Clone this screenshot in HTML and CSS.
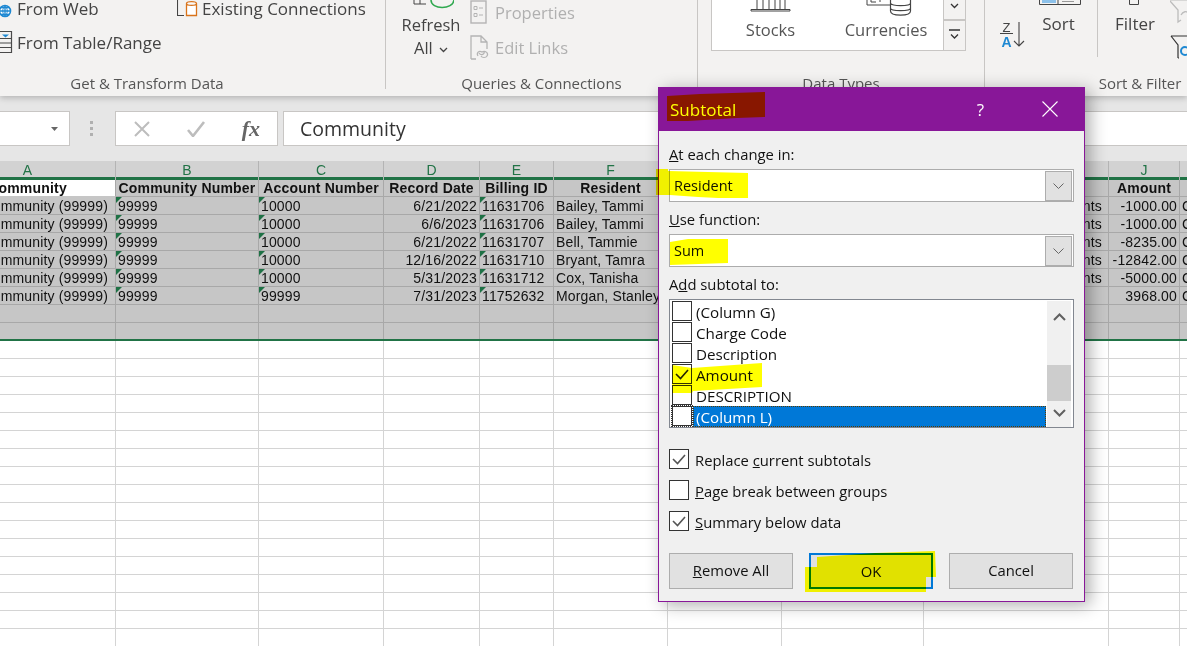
FILE: index.html
```html
<!DOCTYPE html>
<html lang="en">
<head>
<meta charset="utf-8">
<title>Subtotal</title>
<link rel="stylesheet" href="styles.css">
</head>
<body>
<div class="stage">
  <header class="ribbon">
    <section class="group group-get">
      <div class="group-body">
        <div class="col col-sources">
          <div class="cmd cmd-first">
            <svg class="ico" width="14" height="20" viewBox="0 0 14 20"><path d="M1 0h3" stroke="#555" fill="none"/><circle cx="5" cy="13" r="5.500" fill="#fff" stroke="#1e88d2" stroke-width="1.600"/><path d="M-1 13h12M5 7v12M1 9.500h8M1 16.500h8" stroke="#1e88d2" stroke-width="1.300" fill="none"/><path d="M5 7.500c-3 3-3 8 0 11M5 7.500c3 3 3 8 0 11" stroke="#1e88d2" fill="none"/></svg>
            <span>From Web</span>
          </div>
          <div class="cmd cmd-table">
            <svg class="ico" width="14" height="22" viewBox="0 0 14 22"><path d="M0 .5h11.500v21H0M0 7.500h11.500M0 12h11.500M0 16.500h11.500" stroke="#4a4a4a" stroke-width="1.200" fill="none"/><path d="M2 3.500h7l-3.500 3z" fill="#1e88d2"/></svg>
            <span>From Table/Range</span>
          </div>
        </div>
        <div class="col">
          <div class="cmd cmd-first">
            <svg class="ico" width="22" height="20" viewBox="0 0 22 20"><path d="M0.500 0v17.500H7M0 .5h3" stroke="#444" stroke-width="1.100" fill="none"/><path d="M9.500 5.500c0-2.500 10-2.500 10 0v12h-10zM9.500 5.500c0 2.500 10 2.500 10 0" stroke="#d9731a" stroke-width="1.300" fill="#fff"/></svg>
            <span>Existing Connections</span>
          </div>
        </div>
      </div>
      <div class="group-label">Get &amp; Transform Data</div>
    </section>

    <section class="group group-queries">
      <div class="group-body">
        <div class="refresh">
          <svg class="refresh-ico" width="46" height="13" viewBox="0 0 46 13"><path d="M6 0v4h12M12 0v4" stroke="#444" fill="none"/><path d="M23 0c0 10 22 10 23 0" stroke="#2fa84f" stroke-width="1.500" fill="none"/></svg>
          <div class="refresh-line">Refresh</div>
          <div class="refresh-line">All <svg width="9" height="6" viewBox="0 0 9 6"><path d="M1 1l3.500 3.500L8 1" stroke="#444" stroke-width="1.300" fill="none"/></svg></div>
        </div>
        <div class="col col-links">
          <div class="cmd cmd-muted cmd-props">
            <svg class="ico" width="22" height="24" viewBox="0 0 22 24"><rect x="1" y="1" width="15" height="22" fill="none" stroke="#b4b4b4" stroke-width="1.400"/><path d="M4 6.500h3v3H4zM4 13.500h3v3H4zM9 8h4M9 15h4" fill="none" stroke="#b4b4b4"/></svg>
            <span>Properties</span>
          </div>
          <div class="cmd cmd-muted cmd-links">
            <svg class="ico" width="22" height="25" viewBox="0 0 22 25"><path d="M1 24V1h10l6 6v7M11 1v6h6M1 24h5" fill="none" stroke="#b4b4b4" stroke-width="1.300"/><path d="M8 21c-2-3 1-6 4-4 3-2 7 1 5 4-1 2-5 2-6 0M9 18c2 3 6 1 5-1" fill="none" stroke="#b4b4b4" stroke-width="1.200"/></svg>
            <span>Edit Links</span>
          </div>
        </div>
      </div>
      <div class="group-label">Queries &amp; Connections</div>
    </section>

    <section class="group group-types">
      <div class="group-body">
        <div class="gallery">
          <div class="gallery-item gallery-stocks">
            <svg width="42" height="19" viewBox="0 0 42 19"><path d="M7 0v9M13 0v9M19 0v9M25 0v9M30 0v9M35 0v9" stroke="#444" fill="none"/><path d="M1 9.500h39v1.500H1z" stroke="#444" fill="none"/></svg>
            <span>Stocks</span>
          </div>
          <div class="gallery-item gallery-currencies">
            <svg class="currency-ico" width="46" height="19" viewBox="0 0 46 19"><path d="M1 0v5h23M5 0v2h5M14 0v2" stroke="#444" fill="none"/><path d="M24.500 0v11c0 5.500 20 5.500 20 0V0M24.500 3c0 3.500 20 3.500 20 0M24.500 8c0 3.500 20 3.500 20 0" stroke="#444" fill="#fff" stroke-width="1.200"/></svg>
            <span>Currencies</span>
          </div>
          <div class="gallery-scroll">
            <div class="scroll-btn scroll-btn-up"><svg width="9" height="6" viewBox="0 0 9 6"><path d="M1 1l3.500 3.500L8 1" stroke="#333" stroke-width="1.300" fill="none"/></svg></div>
            <div class="scroll-btn scroll-btn-more"><svg width="11" height="11" viewBox="0 0 11 11"><path d="M0 1h11" stroke="#333" stroke-width="1.500"/><path d="M2 5.500l3.500 3.500L9 5.500" stroke="#333" stroke-width="1.300" fill="none"/></svg></div>
          </div>
        </div>
      </div>
      <div class="group-label">Data Types</div>
    </section>

    <section class="group group-sort">
      <div class="group-body">
        <div class="sort-za">
          <span class="za-letters"><span class="za-z">Z</span><span class="za-a">A</span></span>
          <svg width="12" height="25" viewBox="0 0 12 25"><path d="M6 0v24M1 19l5 5 5-5" stroke="#444" stroke-width="1.100" fill="none"/></svg>
        </div>
        <div class="sort-big">
          <svg width="42" height="14" viewBox="0 0 42 14"><path d="M.5 0v4.500h41V0M19 0v4.500" stroke="#444" fill="none"/><path d="M3 0h14v3H3z" fill="#8cc1ea"/><path d="M23 1.500h12" stroke="#999"/></svg>
          <span>Sort</span>
        </div>
        <div class="sort-sep"></div>
        <div class="sort-big sort-filter">
          <svg width="38" height="14" viewBox="0 0 38 14"><path d="M13.500 0v4.500h9V0" stroke="#444" fill="none"/></svg>
          <span>Filter</span>
        </div>
        <div class="funnels">
          <svg width="18" height="24" viewBox="0 0 18 24"><path d="M0 1l8 9v12l3-2" stroke="#bcbcbc" stroke-width="1.300" fill="none"/><path d="M11 15c2-4 6-4 7-2" stroke="#bcbcbc" stroke-width="1.300" fill="none"/><path d="M0 0h18" stroke="#bcbcbc"/></svg>
          <svg width="18" height="24" viewBox="0 0 18 24"><path d="M1 1h16M1 1l7 9v13M8 23h1" stroke="#333" stroke-width="1.200" fill="none"/><circle cx="15" cy="16" r="4" fill="none" stroke="#1e88d2" stroke-width="2"/></svg>
        </div>
      </div>
      <div class="group-label">Sort &amp; Filter</div>
    </section>
  </header>

  <div class="formula-band">
    <div class="name-box"><svg width="7" height="4" viewBox="0 0 7 4"><path d="M0 0h7L3.500 4z" fill="#666"/></svg></div>
    <div class="grip"><i></i><i></i><i></i></div>
    <div class="fx-box">
      <svg width="18" height="16" viewBox="0 0 18 16"><path d="M2 1l14 14M16 1L2 15" stroke="#bdbdbd" stroke-width="2" fill="none"/></svg>
      <svg width="20" height="16" viewBox="0 0 20 16"><path d="M2 9l5 6L18 1" stroke="#bdbdbd" stroke-width="2.600" fill="none"/></svg>
      <span class="fx">fx</span>
    </div>
    <div class="formula-input">Community</div>
  </div>

  <main class="sheet">
    <div class="columns">
      <div class="col-head">A</div><div class="col-head">B</div><div class="col-head">C</div><div class="col-head">D</div><div class="col-head">E</div><div class="col-head">F</div><div class="col-head">G</div><div class="col-head">H</div><div class="col-head">I</div><div class="col-head">J</div><div class="col-head">K</div>
    </div>
    <div class="selection">
      <div class="row row-head">
        <div class="cell head active">Community</div><div class="cell head">Community Number</div><div class="cell head">Account Number</div><div class="cell head">Record Date</div><div class="cell head">Billing ID</div><div class="cell head">Resident</div><div class="cell head"></div><div class="cell head"></div><div class="cell head"></div><div class="cell head">Amount</div><div class="cell head"></div>
      </div>
      <div class="row">
        <div class="cell num">Community (99999)</div><div class="cell flag">99999</div><div class="cell flag">10000</div><div class="cell num">6/21/2022</div><div class="cell flag">11631706</div><div class="cell">Bailey, Tammi</div><div class="cell"></div><div class="cell"></div><div class="cell tail">Adjustments</div><div class="cell num">-1000.00</div><div class="cell">Credit</div>
      </div>
      <div class="row">
        <div class="cell num">Community (99999)</div><div class="cell flag">99999</div><div class="cell flag">10000</div><div class="cell num">6/6/2023</div><div class="cell flag">11631706</div><div class="cell">Bailey, Tammi</div><div class="cell"></div><div class="cell"></div><div class="cell tail">Adjustments</div><div class="cell num">-1000.00</div><div class="cell">Credit</div>
      </div>
      <div class="row">
        <div class="cell num">Community (99999)</div><div class="cell flag">99999</div><div class="cell flag">10000</div><div class="cell num">6/21/2022</div><div class="cell flag">11631707</div><div class="cell">Bell, Tammie</div><div class="cell"></div><div class="cell"></div><div class="cell tail">Adjustments</div><div class="cell num">-8235.00</div><div class="cell">Credit</div>
      </div>
      <div class="row">
        <div class="cell num">Community (99999)</div><div class="cell flag">99999</div><div class="cell flag">10000</div><div class="cell num">12/16/2022</div><div class="cell flag">11631710</div><div class="cell">Bryant, Tamra</div><div class="cell"></div><div class="cell"></div><div class="cell tail">Adjustments</div><div class="cell num">-12842.00</div><div class="cell">Credit</div>
      </div>
      <div class="row">
        <div class="cell num">Community (99999)</div><div class="cell flag">99999</div><div class="cell flag">10000</div><div class="cell num">5/31/2023</div><div class="cell flag">11631712</div><div class="cell">Cox, Tanisha</div><div class="cell"></div><div class="cell"></div><div class="cell tail">Adjustments</div><div class="cell num">-5000.00</div><div class="cell">Credit</div>
      </div>
      <div class="row">
        <div class="cell num">Community (99999)</div><div class="cell flag">99999</div><div class="cell flag">99999</div><div class="cell num">7/31/2023</div><div class="cell flag">11752632</div><div class="cell">Morgan, Stanley</div><div class="cell"></div><div class="cell"></div><div class="cell"></div><div class="cell num">3968.00</div><div class="cell">Credit</div>
      </div>
      <div class="row">
        <div class="cell"></div><div class="cell"></div><div class="cell"></div><div class="cell"></div><div class="cell"></div><div class="cell"></div><div class="cell"></div><div class="cell"></div><div class="cell"></div><div class="cell"></div><div class="cell"></div>
      </div>
      <div class="row row-last">
        <div class="cell"></div><div class="cell"></div><div class="cell"></div><div class="cell"></div><div class="cell"></div><div class="cell"></div><div class="cell"></div><div class="cell"></div><div class="cell"></div><div class="cell"></div><div class="cell"></div>
      </div>
    </div>
    <div class="empty-grid">
      <div></div><div></div><div></div><div></div><div></div><div></div><div></div><div></div><div></div><div></div><div></div>
    </div>
  </main>

  <div class="dialog" role="dialog" aria-label="Subtotal">
    <div class="title-bar">
      <span class="title-text">Subtotal</span>
      <span class="title-help">?</span>
      <svg class="title-close" width="16" height="16" viewBox="0 0 16 16"><path d="M.5.500l15 15M15.500.500l-15 15" stroke="#fff" stroke-width="1.100" fill="none"/></svg>
    </div>
    <div class="dialog-body">
      <div class="field-label"><u>A</u>t each change in:</div>
      <div class="select">
        <span class="select-value">Resident</span>
        <span class="select-btn"><svg width="11" height="6" viewBox="0 0 11 6"><path d="M.5.500l5 5 5-5" stroke="#666" fill="none"/></svg></span>
      </div>
      <div class="field-label field-next"><u>U</u>se function:</div>
      <div class="select">
        <span class="select-value">Sum</span>
        <span class="select-btn"><svg width="11" height="6" viewBox="0 0 11 6"><path d="M.5.500l5 5 5-5" stroke="#666" fill="none"/></svg></span>
      </div>
      <div class="field-label field-next">A<u>d</u>d subtotal to:</div>
      <div class="list">
        <div class="list-rows">
          <div class="list-row"><span class="box"></span><span class="list-text">(Column G)</span></div>
          <div class="list-row"><span class="box"></span><span class="list-text">Charge Code</span></div>
          <div class="list-row"><span class="box"></span><span class="list-text">Description</span></div>
          <div class="list-row"><span class="box"><svg width="18" height="18" viewBox="0 0 18 18"><path d="M3 9l4.500 4.500L15 5" stroke="#222" stroke-width="1.600" fill="none"/></svg></span><span class="list-text">Amount</span></div>
          <div class="list-row"><span class="box"></span><span class="list-text">DESCRIPTION</span></div>
          <div class="list-row list-row-on"><span class="box box-focus"></span><span class="list-text">(Column L)</span></div>
        </div>
        <div class="scrollbar">
          <div class="sb-arrow sb-up"><svg width="13" height="8" viewBox="0 0 13 8"><path d="M1 7l5.500-5.500L12 7" stroke="#606060" stroke-width="2" fill="none"/></svg></div>
          <div class="sb-thumb"></div>
          <div class="sb-arrow sb-down"><svg width="13" height="8" viewBox="0 0 13 8"><path d="M1 1l5.500 5.500L12 1" stroke="#606060" stroke-width="2" fill="none"/></svg></div>
        </div>
      </div>
      <div class="checks">
        <div class="check"><span class="box"><svg width="18" height="18" viewBox="0 0 18 18"><path d="M3 9l4.500 4.500L15 5" stroke="#555" stroke-width="1.600" fill="none"/></svg></span><span class="check-text">Replace <u>c</u>urrent subtotals</span></div>
        <div class="check"><span class="box"></span><span class="check-text"><u>P</u>age break between groups</span></div>
        <div class="check"><span class="box"><svg width="18" height="18" viewBox="0 0 18 18"><path d="M3 9l4.500 4.500L15 5" stroke="#555" stroke-width="1.600" fill="none"/></svg></span><span class="check-text"><u>S</u>ummary below data</span></div>
      </div>
      <div class="actions">
        <div class="btn"><u>R</u>emove All</div>
        <div class="btn btn-default">OK</div>
        <div class="btn">Cancel</div>
      </div>
    </div>
  </div>

  <svg class="marker" width="1187" height="646" viewBox="0 0 1187 646" aria-hidden="true">
    <path d="M667 96L700 94L765 92V117L737 118L688 121H667Z"/>
    <path d="M656 169H668V171L748 173V198H718L698 197L670 195H656Z"/>
    <path d="M670 242L688 239H728V263L670 265Z"/>
    <path d="M672 365L692 368L762 363V387L693 391L692 393H672Z"/>
    <path d="M817 557L875 553L935 551L936 577H926V592H805V567H817Z"/>
  </svg>
</div>
</body>
</html>
```
FILE: styles.css
```css
* { box-sizing: border-box; }
html, body { margin: 0; padding: 0; }
.stage {
  position: relative;
  width: 1187px;
  height: 646px;
  overflow: hidden;
  background: #fff;
  font-family: "Open Sans", "Noto Sans", sans-serif;
  font-size: 14px;
  color: #1a1a1a;
}

/* Ribbon */
.ribbon {
  position: relative;
  z-index: 2;
  display: flex;
  height: 96px;
  background: #f3f2f1;
  box-shadow: 0 2px 6px rgba(0,0,0,.22);
  color: #444;
  font-size: 17px;
}
.group {
  position: relative;
  flex: none;
  height: 89px;
  border-right: 1px solid #c8c6c4;
}
.group-body { display: flex; height: 74px; overflow: hidden; }
.group-label { height: 20px; line-height: 18px; font-size: 15px; text-align: center; color: #555; white-space: nowrap; }
.group-get { width: 477px; margin-left: -91px; }
.group-queries { width: 312px; }
.group-types { width: 287px; }
.group-sort { width: 310px; border-right: 0; }
.col { display: flex; flex-direction: column; }
.col-sources { width: 268px; padding-left: 91px; }
.cmd { display: flex; align-items: center; height: 20px; white-space: nowrap; }
.cmd-first { margin-top: -2px; }
.cmd-table { margin-top: 14px; }
.ico { flex: none; }
.cmd .ico + span { margin-left: 3px; }
.cmd-muted { color: #b0b0b0; }

.refresh { width: 84px; padding-left: 10px; padding-right: 4px; text-align: center; font-size: 16.5px; }
.refresh-ico { display: block; margin: 0 auto; }
.refresh-line { height: 23px; line-height: 23px; white-space: nowrap; }
.refresh-line svg { vertical-align: middle; margin-left: 2px; }
.col-links { padding-top: 2px; font-size: 16.5px; }
.cmd-links { margin-top: 15px; }

.gallery {
  display: flex;
  width: 255px;
  height: 51px;
  margin-left: 13px;
  background: #fff;
  border: 1px solid #c8c6c4;
  border-top: 0;
}
.gallery-item { display: flex; flex-direction: column; align-items: center; flex: none; white-space: nowrap; }
.gallery-item svg { display: block; }
.gallery-item span { line-height: 22px; color: #555; font-size: 16.5px; }
.gallery-stocks { width: 117px; }
.gallery-currencies { width: 114px; }
.gallery-item .currency-ico { margin-left: 6px; }
.gallery-scroll { margin-left: auto; width: 22px; border-left: 1px solid #c8c6c4; background: #f3f2f1; }
.scroll-btn { display: flex; justify-content: center; }
.scroll-btn-up { height: 21px; padding-top: 3px; border-bottom: 2px solid #c8c6c4; }
.scroll-btn-more { padding-top: 8px; }

.sort-za { display: flex; width: 54px; padding: 22px 0 0 15px; }
.za-letters { display: flex; flex-direction: column; width: 13px; font-family: "Liberation Sans", sans-serif; }
.za-z { color: #444; border-bottom: 1px solid #444; height: 12px; font-size: 13px; line-height: 11px; text-align: center; }
.za-a { color: #1e88d2; font-weight: bold; font-size: 14px; line-height: 12px; text-align: center; margin-top: 2px; }
.sort-big { display: flex; flex-direction: column; align-items: center; width: 42px; flex: none; white-space: nowrap; }
.sort-big svg { display: block; }
.sort-big span { line-height: 20px; margin-right: 3px; }
.sort-sep { width: 1px; height: 57px; margin-left: 16px; background: #c8c6c4; }
.sort-filter { margin-left: 18px; width: 38px; }
.sort-filter span { margin-right: 0; }
.funnels { display: flex; flex-direction: column; gap: 11px; margin-left: 16px; }
.funnels svg { display: block; }

/* Formula bar */
.formula-band {
  display: flex;
  height: 65px;
  padding-top: 15px;
  background: #e6e6e6;
}
.name-box {
  display: flex;
  align-items: center;
  justify-content: flex-end;
  width: 70px;
  height: 35px;
  padding-right: 11px;
  background: #fff;
  border: 1px solid #c8c6c4;
  border-left: 0;
}
.grip { display: flex; flex-direction: column; align-items: center; justify-content: center; gap: 3px; width: 45px; height: 35px; padding-right: 2px; }
.grip i { width: 3px; height: 3px; background: #b0b0b0; }
.fx-box {
  display: flex;
  align-items: center;
  width: 163px;
  height: 35px;
  padding: 0 17px;
  justify-content: space-between;
  background: #fff;
  border: 1px solid #c8c6c4;
}
.fx { font-family: "Liberation Serif", serif; font-style: italic; font-weight: bold; font-size: 22px; color: #666; }
.formula-input {
  flex: 1;
  height: 35px;
  margin-left: 5px;
  padding-left: 16px;
  line-height: 33px;
  font-size: 19.500px;
  color: #333;
  background: #fff;
  border: 1px solid #c8c6c4;
  border-right: 0;
}

/* Sheet */
.sheet { margin-left: -60px; width: 1340px; }
.columns, .row, .empty-grid {
  display: grid;
  grid-template-columns: 176px 143px 125px 96px 74px 114px 114px 142px 185px 71px 100px;
}
.columns { height: 16px; background: #d2d2d2; }
.col-head {
  line-height: 19px;
  text-align: center;
  color: #217346;
  font-family: "Liberation Sans", sans-serif;
  font-size: 14px;
  border-right: 1px solid #b4b4b4;
}
.selection {
  border-top: 3px solid #217346;
  border-bottom: 2px solid #217346;
  background: #c6c6c6;
  font-family: "Liberation Sans", sans-serif;
  letter-spacing: .15px;
  color: #111;
}
.row { height: 18px; }
.row-head { height: 17px; }
.row-last { height: 16px; }
.cell {
  position: relative;
  height: 100%;
  padding: 0 2px;
  line-height: 18px;
  white-space: nowrap;
  overflow: hidden;
  border-right: 1px solid #a8a8a8;
  border-bottom: 1px solid #a8a8a8;
}
.row-last .cell { border-bottom: 0; }
.head { font-weight: bold; text-align: center; line-height: 17px; letter-spacing: .2px; }
.active { background: #fff; border-bottom-color: #c6c6c6; }
.num { text-align: right; padding-right: 2px; }
.row .cell.num:first-child { padding-right: 7px; }
.tail { text-align: right; padding-right: 6px; }
.flag::before {
  content: "";
  position: absolute;
  left: 0;
  top: 0;
  border-top: 6px solid #1e7145;
  border-right: 6px solid transparent;
}
.empty-grid { height: 310px; }
.empty-grid div {
  border-right: 1px solid #d4d4d4;
  background: repeating-linear-gradient(to bottom, #fff 0, #fff 17px, #d4d4d4 17px, #d4d4d4 18px);
}

/* Dialog */
.dialog {
  position: absolute;
  z-index: 5;
  left: 658px;
  top: 87px;
  width: 427px;
  height: 515px;
  border: 1px solid #881798;
  background: #f0f0f0;
  box-shadow: 5px 3px 16px rgba(0,0,0,.32);
  font-size: 14.800px;
  color: #111;
}
.title-bar {
  display: flex;
  align-items: center;
  height: 44px;
  margin: -1px -1px 0;
  padding-left: 12px;
  background: #881798;
  color: #fff;
}
.title-text { font-size: 17px; }
.title-help { margin-left: auto; font-size: 17px; }
.title-close { margin-left: 58px; margin-right: 27px; }
.dialog-body { padding: 13px 10px 0; }
.field-label { height: 20px; line-height: 20px; margin-bottom: 5px; white-space: nowrap; }
.field-next { margin-top: 7px; }
.select {
  display: flex;
  align-items: center;
  justify-content: space-between;
  width: 405px;
  height: 33px;
  padding: 0 1px 0 4px;
  background: #fff;
  border: 1px solid #acacac;
}
.select-value { padding-top: 0; font-size: 14.500px; }
.select-btn {
  display: flex;
  align-items: center;
  justify-content: center;
  width: 27px;
  height: 30px;
  background: #e1e1e1;
  border: 1px solid #adadad;
}
.list {
  display: flex;
  width: 405px;
  height: 129px;
  padding: 1px 2px 0;
  background: #fff;
  border: 1px solid #828790;
}
.list-rows { flex: 1; }
.list-row { display: flex; height: 21px; }
.box {
  display: flex;
  align-items: center;
  justify-content: center;
  flex: none;
  width: 20px;
  height: 20px;
  background: #fff;
  border: 1px solid #333;
}
.box-focus { outline: 1px dotted #333; outline-offset: 0; }
.list-text { flex: 1; margin-left: 1px; padding-left: 3px; font-size: 15.200px; line-height: 23px; white-space: nowrap; }
.list-row-on .list-text { background: #0078d7; color: #fff; outline: 1px dotted #5a3a00; outline-offset: -1px; }
.scrollbar {
  display: flex;
  flex-direction: column;
  width: 24px;
  margin-left: 1px;
  background: #f0f0f0;
}
.sb-arrow { display: flex; justify-content: center; flex: none; }
.sb-up { height: 30px; padding-top: 12px; }
.sb-thumb { height: 37px; margin-top: 34px; background: #cdcdcd; }
.sb-down { margin-top: auto; height: 26px; padding-top: 8px; }
.checks { display: flex; flex-direction: column; gap: 11px; margin-top: 21px; }
.check { display: flex; align-items: center; gap: 6px; height: 20px; white-space: nowrap; }
.check-text { padding-top: 2px; }
.actions { display: flex; gap: 16px; margin-top: 22px; }
.btn {
  width: 124px;
  height: 36px;
  line-height: 33px;
  text-align: center;
  background: #e1e1e1;
  border: 1px solid #adadad;
}
.btn-default { border: 2px solid #0078d7; line-height: 32px; }

/* Highlighter strokes drawn over the screenshot */
.marker {
  position: absolute;
  z-index: 6;
  left: 0;
  top: 0;
  mix-blend-mode: multiply;
  pointer-events: none;
}
.marker path { fill: #ffff00; }
```
